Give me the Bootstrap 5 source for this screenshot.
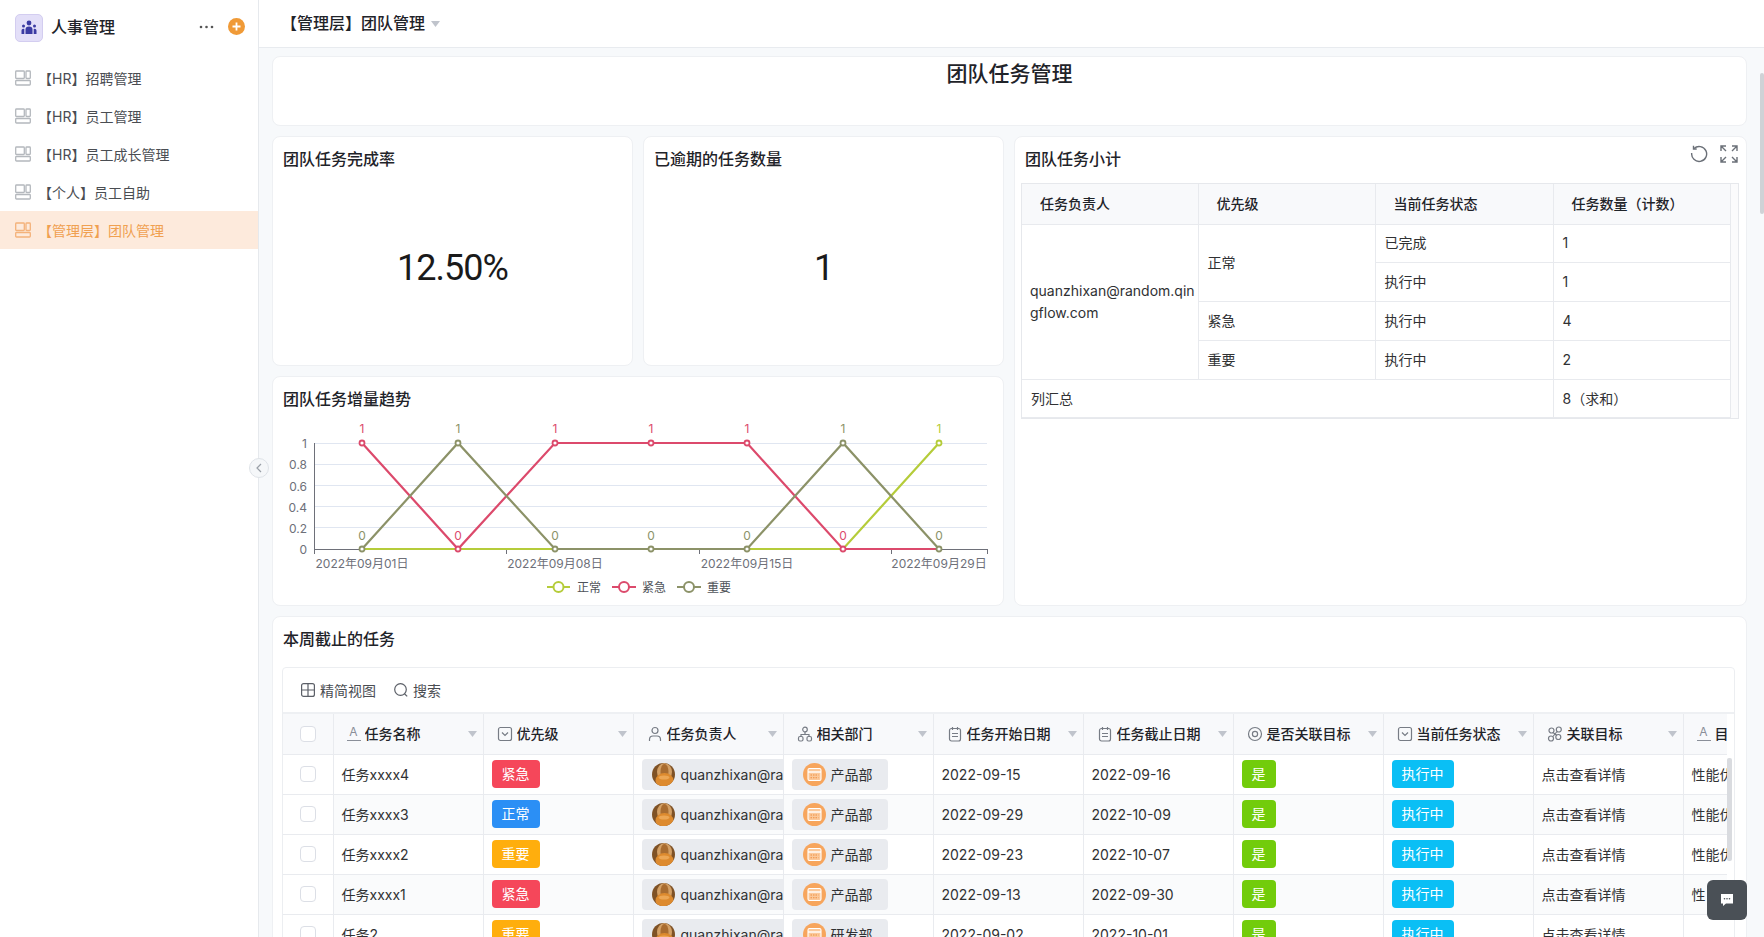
<!DOCTYPE html>
<html lang="zh-CN">
<head>
<meta charset="utf-8">
<title>团队任务管理</title>
<link rel="stylesheet" href="https://cdn.jsdelivr.net/npm/bootstrap@5.3.0/dist/css/bootstrap.min.css">
<style>
html,body{height:937px;overflow:hidden}
body{font-family:Inter,"Noto Sans CJK SC",sans-serif;font-size:14px;color:#303133;background:#f7f9fb}
.app-shell{height:937px;width:1764px;position:relative}
.side-panel{width:259px;flex:none;background:#fff;border-right:1px solid #e6e9ed}
.side-head{height:59px;padding:14px 13px 0 15px}
.side-logo{width:28px;height:28px;border-radius:5px;background:#e3dff8;border:1px solid #d3cdf0}
.side-title{font-size:16px;font-weight:500;color:#1f2329;margin-left:8px;line-height:26px}
.side-dots{margin-right:14px;margin-top:7px;flex:none}
.side-plus{margin-top:4px;flex:none}
.side-item{height:38px;padding:0 0 0 15px;color:#4a4d52;font-size:14px}
.side-item:hover{color:#4a4d52}
.side-item svg{margin-right:7px;flex:none}
.side-item.is-on{background:#fdeadc;color:#f0a050}
.top-strip{flex:none;height:48px;background:#fff;border-bottom:1px solid #e8ebef;padding:0 0 2px 22px;font-size:16px;font-weight:500;color:#1f2329}
.top-strip .drop-tri{margin-left:6px;margin-top:2px}
.drop-tri{flex:none}
.board{flex:none;display:grid;grid-template-columns:361px 361px 733px;grid-template-rows:70px 230px 230px 400px;gap:10px;padding:8px 0 0 13px;width:1488px}
.pane{background:#fff;border:1px solid #eef0f3;border-radius:8px;overflow:hidden;position:relative}
.pane-head{font-size:16px;font-weight:500;color:#1f2329;line-height:24px;padding:10px 10px 0}
.pane-wide{grid-column:1 / 4}
.pane-tall{grid-column:3;grid-row:2 / 4}
.pane-chart{grid-column:1 / 3}
.page-title{font-size:21px;font-weight:500;line-height:24px;padding-top:5px;color:#1f2329}
.stat-num{font-family:Roboto,sans-serif;font-size:36px;color:#1a1a1a;letter-spacing:-1px}
.tool-tray{position:absolute;top:8px;right:8px;gap:12px}
.sum-box{margin:12px 7px 0 6px;border:1px solid #e6e8ec;padding-right:9px;background:#fbfbfc}
.sum-tbl{table-layout:fixed;width:708px;margin:0;background:#fff;font-size:14px;border-collapse:collapse}
.sum-tbl col:nth-child(1){width:176px}
.sum-tbl col:nth-child(2){width:177px}
.sum-tbl col:nth-child(3){width:178px}
.sum-tbl col:nth-child(4){width:177px}
.sum-tbl th,.sum-tbl td{border:1px solid #e8eaee;padding:0 8px 0 9px;height:38.8px;font-weight:400;color:#303133;vertical-align:middle;line-height:22px;border-top:0}
.sum-tbl tr>*:first-child{border-left:0}
.sum-tbl thead th{background:#f8f9fb;font-weight:500;padding-left:18px;height:40px;color:#1f2329}
.sum-tbl .mail{word-break:break-all;padding:0 2px 0 8px}
.chart-svg{display:block}
.chart-svg text{font-family:Inter,"Noto Sans CJK SC",sans-serif;font-size:12px}
.task-box{margin:16px 11px 0 9px;border:1px solid #eceef1;border-radius:4px 4px 0 0;position:relative;overflow:hidden;height:280px}
.task-bar{height:46px;padding-left:18px;gap:18px;border-bottom:2px solid #eef0f3;color:#4a4d52}
.task-bar span{display:inline-flex;align-items:center;gap:5px}
.task-clip{width:1444px;overflow:hidden}
.task-tbl{table-layout:fixed;width:1550px;margin:0;border-collapse:collapse;font-size:14px}
.task-tbl th,.task-tbl td{border:1px solid #e9ebef;border-top:0;height:40px;padding:0 8px;white-space:nowrap;overflow:hidden;color:#303133;vertical-align:middle}
.task-tbl tr>*:first-child{border-left:0}
.task-tbl th{background:#f8f9fb;height:40px;font-weight:500;color:#1f2329;padding:0 0 0 13px}
.task-tbl tbody tr:nth-child(even) td{background:#fafbfc}
.task-tbl tbody tr td:first-child{background:#fff}
.task-tbl .w-chk{width:50px}
.task-tbl .w-col{width:150px}
.th-row{gap:4px;padding-right:6px}
.th-row b{font-weight:500;flex:1;overflow:hidden}
.ico-a{display:inline-block;width:14px;height:15px;line-height:12px;font-size:12px;font-weight:400;color:#8a8f99;text-align:center;border-bottom:1px solid #8a8f99;flex:none}
.tick-box{display:block;width:16px;height:16px;border:1px solid #dcdfe6;border-radius:4px;background:#fff;margin:0 auto}
.task-tbl th.cell-chk,.task-tbl td.cell-chk{padding:0}
.chip-tag{display:inline-block;height:28px;line-height:28px;padding:0 10px;border-radius:4px;color:#fff;font-size:14px;vertical-align:middle}
.bg-urgent{background:#f5475a}
.bg-normal{background:#2b8ff5}
.bg-major{background:#ffae0d}
.bg-yes{background:#72cc0b;padding:0 10px}
.bg-run{background:#0abff5}
.chip-ent{display:inline-flex;align-items:center;height:31px;gap:6px;background:#e9ebef;border-radius:4px;padding:0 10px;vertical-align:middle;color:#303133}
.chip-ent svg{flex:none}
.chip-org{padding:0 15px 0 11px;gap:5px}
.fold-dot{position:absolute;left:249px;top:458px;width:20px;height:20px;border-radius:50%;background:#f5f7f9;border:1px solid #dfe3e8}
.page-thumb{position:absolute;right:0;top:73px;width:4px;height:141px;background:#cfd2d6;border-radius:2px}
.grid-thumb{position:absolute;left:1444px;top:90px;width:5px;height:103px;background:#d9dbdf;border-radius:2px}
.help-btn{position:absolute;left:1707px;top:880px;width:40px;height:40px;background:#4a5056;border-radius:6px}
</style>
</head>
<body>
<svg width="0" height="0" class="position-absolute">
<defs>
<symbol id="i-menu" viewBox="0 0 16 16"><g fill="none" stroke="currentColor" stroke-width="1.3"><rect x=".7" y="1" width="8.6" height="7.5" rx=".8"/><rect x="11" y="1" width="4.3" height="7.5" rx=".8"/><rect x=".7" y="10.5" width="14.6" height="4.5" rx=".8"/></g></symbol>
<symbol id="i-sel" viewBox="0 0 16 16"><rect x="1.5" y="1.5" width="13" height="13" rx="2" fill="none" stroke="#777c85" stroke-width="1.2"/><path d="M5 6.5l3 3 3-3" fill="none" stroke="#777c85" stroke-width="1.2"/></symbol>
<symbol id="i-user" viewBox="0 0 16 16"><circle cx="8" cy="4.5" r="3" fill="none" stroke="#777c85" stroke-width="1.2"/><path d="M2.5 15v-1.5a3.5 3.5 0 0 1 3.5-3.5h4a3.5 3.5 0 0 1 3.5 3.5V15" fill="none" stroke="#777c85" stroke-width="1.2"/></symbol>
<symbol id="i-dept" viewBox="0 0 16 16"><g fill="none" stroke="#777c85" stroke-width="1.2"><circle cx="8" cy="3.5" r="2.3"/><rect x="1.5" y="10.5" width="4.5" height="4.5" rx="1.5"/><rect x="10" y="10.5" width="4.5" height="4.5" rx="1.5"/><path d="M8 6v2.5M4 10.5V8.5h8v2"/></g></symbol>
<symbol id="i-date" viewBox="0 0 16 16"><g fill="none" stroke="#777c85" stroke-width="1.2"><rect x="2.500" y="2.500" width="11" height="12.500" rx="2"/><path d="M5.500 1v3M10.500 1v3M5 7.500h6M5 10.500h6"/></g></symbol>
<symbol id="i-ring" viewBox="0 0 16 16"><g fill="none" stroke="#777c85" stroke-width="1.2"><circle cx="8" cy="8" r="6.5"/><circle cx="8" cy="8" r="2.6"/></g></symbol>
<symbol id="i-link" viewBox="0 0 16 16"><g fill="none" stroke="#777c85" stroke-width="1.2"><circle cx="4.500" cy="4.500" r="2.500"/><circle cx="11.800" cy="3.500" r="2.500"/><circle cx="4" cy="12.500" r="2.500"/><circle cx="11.300" cy="11" r="2.500"/><path d="M6 6.500l4 3M10 5.500l-4 5"/></g></symbol>
<symbol id="i-ava" viewBox="0 0 23 23"><clipPath id="ava-c"><circle cx="11.5" cy="11.5" r="11.5"/></clipPath><g clip-path="url(#ava-c)"><rect width="23" height="23" fill="#7f5226"/><ellipse cx="12.500" cy="9" rx="7.500" ry="9" fill="#d3a066"/><ellipse cx="12.500" cy="9" rx="4" ry="8" fill="#a96c30"/><ellipse cx="12.500" cy="17.500" rx="9" ry="7.500" fill="#dd8a2e"/><ellipse cx="12" cy="14.500" rx="5.500" ry="2" fill="#eca654"/></g></symbol>
<symbol id="i-org" viewBox="0 0 23 23"><circle cx="11.5" cy="11.5" r="11.5" fill="#f7a55c"/><rect x="5" y="5.500" width="13" height="12" rx="1.500" fill="#fbc99b" stroke="#fff" stroke-width="1.1"/><path d="M5 9h13" stroke="#fff" stroke-width="1.4"/><path d="M7.500 12h8M7.500 14.800h8" stroke="#ee8f42" stroke-width="1.100" stroke-dasharray="1.500 1"/></symbol>
<symbol id="i-tri" viewBox="0 0 9 6"><path d="M0 0h9L4.500 6z" fill="#c0c4cc"/></symbol>
</defs>
</svg>

<div class="app-shell d-flex">
  <aside class="side-panel d-flex flex-column">
    <div class="side-head d-flex align-items-start">
      <div class="side-logo d-flex align-items-center justify-content-center">
        <svg width="18" height="16" viewBox="0 0 18 16" fill="#3b3ba3"><circle cx="9" cy="3" r="2.400"/><circle cx="3.500" cy="6" r="1.500"/><circle cx="14.500" cy="6" r="1.500"/><path d="M5.500 14V9.500A3.500 3 0 0 1 12.500 9.500V14z"/><path d="M1.500 14v-3.500A2 2 0 0 1 4.300 9v5zM16.500 14v-3.500A2 2 0 0 0 13.700 9v5z"/></svg>
      </div>
      <span class="side-title flex-grow-1">人事管理</span>
      <svg class="side-dots" width="15" height="12" viewBox="0 0 15 12" fill="#555"><circle cx="2" cy="6" r="1.300"/><circle cx="7.500" cy="6" r="1.300"/><circle cx="13" cy="6" r="1.300"/></svg>
      <svg class="side-plus" width="17" height="17" viewBox="0 0 17 17"><circle cx="8.500" cy="8.500" r="8.500" fill="#f09a37"/><path d="M8.500 4.500v8M4.500 8.500h8" stroke="#fff" stroke-width="1.800"/></svg>
    </div>
    <nav class="nav flex-column">
      <a class="nav-link side-item d-flex align-items-center" href="#"><svg width="16" height="16" color="#b4b8bd"><use href="#i-menu"/></svg>【HR】招聘管理</a>
      <a class="nav-link side-item d-flex align-items-center" href="#"><svg width="16" height="16" color="#b4b8bd"><use href="#i-menu"/></svg>【HR】员工管理</a>
      <a class="nav-link side-item d-flex align-items-center" href="#"><svg width="16" height="16" color="#b4b8bd"><use href="#i-menu"/></svg>【HR】员工成长管理</a>
      <a class="nav-link side-item d-flex align-items-center" href="#"><svg width="16" height="16" color="#b4b8bd"><use href="#i-menu"/></svg>【个人】员工自助</a>
      <a class="nav-link side-item is-on d-flex align-items-center" href="#"><svg width="16" height="16" color="#f4b27a"><use href="#i-menu"/></svg>【管理层】团队管理</a>
    </nav>
  </aside>

  <main class="flex-grow-1 d-flex flex-column overflow-hidden">
    <div class="top-strip d-flex align-items-center">【管理层】团队管理<svg class="drop-tri" width="9" height="6"><use href="#i-tri"/></svg></div>
    <div class="board">
      <section class="pane pane-wide text-center"><div class="page-title">团队任务管理</div></section>

      <section class="pane d-flex flex-column">
        <div class="pane-head">团队任务完成率</div>
        <div class="flex-grow-1 d-flex align-items-center justify-content-center stat-num">12.50%</div>
      </section>
      <section class="pane d-flex flex-column">
        <div class="pane-head">已逾期的任务数量</div>
        <div class="flex-grow-1 d-flex align-items-center justify-content-center stat-num">1</div>
      </section>
      <section class="pane pane-tall">
        <div class="pane-head">团队任务小计</div>
        <div class="tool-tray d-flex">
          <svg width="18" height="18" viewBox="0 0 18 18" fill="none" stroke="#6b7078" stroke-width="1.400"><path d="M4 3.500A7.500 7.500 0 1 1 1.700 8"/><path d="M3.500 .8v3.200h3.200"/></svg>
          <svg width="18" height="18" viewBox="0 0 18 18" fill="none" stroke="#6b7078" stroke-width="1.400"><path d="M1 6V1h5M17 6V1h-5M1 12v5h5M17 12v5h-5M1 1l5 5M17 1l-5 5M1 17l5-5M17 17l-5-5"/></svg>
        </div>
        <div class="sum-box">
          <table class="table sum-tbl">
            <colgroup><col><col><col><col></colgroup>
            <thead><tr><th>任务负责人</th><th>优先级</th><th>当前任务状态</th><th>任务数量（计数）</th></tr></thead>
            <tbody>
              <tr><td rowspan="4" class="mail">quanzhixan@random.qingflow.com</td><td rowspan="2">正常</td><td>已完成</td><td>1</td></tr>
              <tr><td>执行中</td><td>1</td></tr>
              <tr><td>紧急</td><td>执行中</td><td>4</td></tr>
              <tr><td>重要</td><td>执行中</td><td>2</td></tr>
              <tr><td colspan="3">列汇总</td><td>8（求和）</td></tr>
            </tbody>
          </table>
        </div>
      </section>

      <section class="pane pane-chart">
        <div class="pane-head">团队任务增量趋势</div>
        <svg class="chart-svg" width="730" height="192" viewBox="273 411 730 192">
          <g stroke="#e0e6f1"><line x1="314" x2="987" y1="443.500" y2="443.500"/><line x1="314" x2="987" y1="464.500" y2="464.500"/><line x1="314" x2="987" y1="485.500" y2="485.500"/><line x1="314" x2="987" y1="506.500" y2="506.500"/><line x1="314" x2="987" y1="527.500" y2="527.500"/></g>
          <g stroke="#6e7079"><line x1="314.500" x2="314.500" y1="443" y2="549"/><line x1="314" x2="987.500" y1="549.500" y2="549.500"/><line x1="314.500" x2="314.500" y1="549" y2="554"/><line x1="506.500" x2="506.500" y1="549" y2="554"/><line x1="699.500" x2="699.500" y1="549" y2="554"/><line x1="891.500" x2="891.500" y1="549" y2="554"/><line x1="987.500" x2="987.500" y1="549" y2="554"/></g>
          <g fill="#6e7079" text-anchor="end" dominant-baseline="central"><text x="307" y="443">1</text><text x="307" y="464">0.8</text><text x="307" y="486">0.6</text><text x="307" y="507">0.4</text><text x="307" y="528">0.2</text><text x="307" y="549">0</text></g>
          <g fill="#6e7079" text-anchor="middle" dominant-baseline="central"><text x="362" y="563">2022年09月01日</text><text x="555" y="563">2022年09月08日</text><text x="747" y="563">2022年09月15日</text><text x="939" y="563">2022年09月29日</text></g>
          <polyline points="362,549 458,549 555,549 651,549 747,549 843,549 939,443" fill="none" stroke="#b5cc3a" stroke-width="2.200"/>
          <polyline points="362,443 458,549 555,443 651,443 747,443 843,549 939,549" fill="none" stroke="#dc4a6c" stroke-width="2.200"/>
          <polyline points="362,549 458,443 555,549 651,549 747,549 843,443 939,549" fill="none" stroke="#8c9268" stroke-width="2.200"/>
          <g fill="#fff" stroke-width="1.800">
            <circle cx="939" cy="443" r="2.500" stroke="#b5cc3a"/>
            <g stroke="#dc4a6c"><circle cx="362" cy="443" r="2.500"/><circle cx="458" cy="549" r="2.500"/><circle cx="555" cy="443" r="2.500"/><circle cx="651" cy="443" r="2.500"/><circle cx="747" cy="443" r="2.500"/><circle cx="843" cy="549" r="2.500"/></g>
            <g stroke="#8c9268"><circle cx="362" cy="549" r="2.500"/><circle cx="458" cy="443" r="2.500"/><circle cx="555" cy="549" r="2.500"/><circle cx="651" cy="549" r="2.500"/><circle cx="747" cy="549" r="2.500"/><circle cx="843" cy="443" r="2.500"/><circle cx="939" cy="549" r="2.500"/></g>
          </g>
          <g text-anchor="middle" dominant-baseline="central">
            <g fill="#dc4a6c"><text x="362" y="428">1</text><text x="555" y="428">1</text><text x="651" y="428">1</text><text x="747" y="428">1</text><text x="458" y="535">0</text><text x="843" y="535">0</text></g>
            <g fill="#8c9268"><text x="458" y="428">1</text><text x="843" y="428">1</text><text x="362" y="535">0</text><text x="555" y="535">0</text><text x="651" y="535">0</text><text x="747" y="535">0</text><text x="939" y="535">0</text></g>
            <text x="939" y="428" fill="#b5cc3a">1</text>
          </g>
          <g fill="#fff" stroke-width="2">
            <line x1="547" x2="570" y1="587" y2="587" stroke="#b5cc3a"/><circle cx="558.500" cy="587" r="5" stroke="#b5cc3a"/>
            <line x1="612" x2="636" y1="587" y2="587" stroke="#dc4a6c"/><circle cx="624" cy="587" r="5" stroke="#dc4a6c"/>
            <line x1="677" x2="701" y1="587" y2="587" stroke="#8c9268"/><circle cx="689" cy="587" r="5" stroke="#8c9268"/>
          </g>
          <g fill="#4f5359" dominant-baseline="central"><text x="577" y="587">正常</text><text x="642" y="587">紧急</text><text x="707" y="587">重要</text></g>
        </svg>
      </section>

      <section class="pane pane-wide">
        <div class="pane-head">本周截止的任务</div>
        <div class="task-box">
          <div class="task-bar d-flex align-items-center">
            <span><svg width="14" height="14" viewBox="0 0 14 14" fill="none" stroke="#5c6068" stroke-width="1.200"><rect x=".6" y=".6" width="12.800" height="12.800" rx="2"/><path d="M7 .6v12.800M.6 7h12.800"/></svg>精简视图</span>
            <span><svg width="14" height="14" viewBox="0 0 14 14" fill="none" stroke="#5c6068" stroke-width="1.200"><circle cx="6.500" cy="6.500" r="5.800"/><path d="M10.500 10.800l2.700 2.600"/></svg>搜索</span>
          </div>
          <div class="task-clip">
            <table class="table task-tbl">
              <colgroup><col class="w-chk"><col class="w-col"><col class="w-col"><col class="w-col"><col class="w-col"><col class="w-col"><col class="w-col"><col class="w-col"><col class="w-col"><col class="w-col"><col class="w-col"></colgroup>
              <thead><tr>
                <th class="cell-chk"><span class="tick-box"></span></th>
                <th><div class="d-flex align-items-center th-row"><span class="ico-a">A</span><b>任务名称</b><svg width="9" height="6"><use href="#i-tri"/></svg></div></th>
                <th><div class="d-flex align-items-center th-row"><svg width="16" height="16"><use href="#i-sel"/></svg><b>优先级</b><svg width="9" height="6"><use href="#i-tri"/></svg></div></th>
                <th><div class="d-flex align-items-center th-row"><svg width="16" height="16"><use href="#i-user"/></svg><b>任务负责人</b><svg width="9" height="6"><use href="#i-tri"/></svg></div></th>
                <th><div class="d-flex align-items-center th-row"><svg width="16" height="16"><use href="#i-dept"/></svg><b>相关部门</b><svg width="9" height="6"><use href="#i-tri"/></svg></div></th>
                <th><div class="d-flex align-items-center th-row"><svg width="16" height="16"><use href="#i-date"/></svg><b>任务开始日期</b><svg width="9" height="6"><use href="#i-tri"/></svg></div></th>
                <th><div class="d-flex align-items-center th-row"><svg width="16" height="16"><use href="#i-date"/></svg><b>任务截止日期</b><svg width="9" height="6"><use href="#i-tri"/></svg></div></th>
                <th><div class="d-flex align-items-center th-row"><svg width="16" height="16"><use href="#i-ring"/></svg><b>是否关联目标</b><svg width="9" height="6"><use href="#i-tri"/></svg></div></th>
                <th><div class="d-flex align-items-center th-row"><svg width="16" height="16"><use href="#i-sel"/></svg><b>当前任务状态</b><svg width="9" height="6"><use href="#i-tri"/></svg></div></th>
                <th><div class="d-flex align-items-center th-row"><svg width="16" height="16"><use href="#i-link"/></svg><b>关联目标</b><svg width="9" height="6"><use href="#i-tri"/></svg></div></th>
                <th><div class="d-flex align-items-center th-row"><span class="ico-a">A</span><b>目</b></div></th>
              </tr></thead>
              <tbody>
                <tr><td class="cell-chk"><span class="tick-box"></span></td><td>任务xxxx4</td><td><span class="chip-tag bg-urgent">紧急</span></td><td><span class="chip-ent"><svg width="23" height="23"><use href="#i-ava"/></svg>quanzhixan@ran</span></td><td><span class="chip-ent chip-org"><svg width="23" height="23"><use href="#i-org"/></svg>产品部</span></td><td>2022-09-15</td><td>2022-09-16</td><td><span class="chip-tag bg-yes">是</span></td><td><span class="chip-tag bg-run">执行中</span></td><td>点击查看详情</td><td>性能优</td></tr>
                <tr><td class="cell-chk"><span class="tick-box"></span></td><td>任务xxxx3</td><td><span class="chip-tag bg-normal">正常</span></td><td><span class="chip-ent"><svg width="23" height="23"><use href="#i-ava"/></svg>quanzhixan@ran</span></td><td><span class="chip-ent chip-org"><svg width="23" height="23"><use href="#i-org"/></svg>产品部</span></td><td>2022-09-29</td><td>2022-10-09</td><td><span class="chip-tag bg-yes">是</span></td><td><span class="chip-tag bg-run">执行中</span></td><td>点击查看详情</td><td>性能优</td></tr>
                <tr><td class="cell-chk"><span class="tick-box"></span></td><td>任务xxxx2</td><td><span class="chip-tag bg-major">重要</span></td><td><span class="chip-ent"><svg width="23" height="23"><use href="#i-ava"/></svg>quanzhixan@ran</span></td><td><span class="chip-ent chip-org"><svg width="23" height="23"><use href="#i-org"/></svg>产品部</span></td><td>2022-09-23</td><td>2022-10-07</td><td><span class="chip-tag bg-yes">是</span></td><td><span class="chip-tag bg-run">执行中</span></td><td>点击查看详情</td><td>性能优</td></tr>
                <tr><td class="cell-chk"><span class="tick-box"></span></td><td>任务xxxx1</td><td><span class="chip-tag bg-urgent">紧急</span></td><td><span class="chip-ent"><svg width="23" height="23"><use href="#i-ava"/></svg>quanzhixan@ran</span></td><td><span class="chip-ent chip-org"><svg width="23" height="23"><use href="#i-org"/></svg>产品部</span></td><td>2022-09-13</td><td>2022-09-30</td><td><span class="chip-tag bg-yes">是</span></td><td><span class="chip-tag bg-run">执行中</span></td><td>点击查看详情</td><td>性</td></tr>
                <tr><td class="cell-chk"><span class="tick-box"></span></td><td>任务2</td><td><span class="chip-tag bg-major">重要</span></td><td><span class="chip-ent"><svg width="23" height="23"><use href="#i-ava"/></svg>quanzhixan@ran</span></td><td><span class="chip-ent chip-org"><svg width="23" height="23"><use href="#i-org"/></svg>研发部</span></td><td>2022-09-02</td><td>2022-10-01</td><td><span class="chip-tag bg-yes">是</span></td><td><span class="chip-tag bg-run">执行中</span></td><td>点击查看详情</td><td></td></tr>
              </tbody>
            </table>
          </div>
          <div class="grid-thumb"></div>
        </div>
      </section>
    </div>
  </main>

  <div class="fold-dot d-flex align-items-center justify-content-center"><svg width="8" height="10" viewBox="0 0 8 10" fill="none" stroke="#9aa0a8" stroke-width="1.200"><path d="M6 1L2 5l4 4"/></svg></div>
  <div class="page-thumb"></div>
  <div class="help-btn d-flex align-items-center justify-content-center"><svg width="14" height="14" viewBox="0 0 14 14"><path d="M1 1h12v9.500H6l-3 2.500v-2.500H1z" fill="#fff"/><g fill="#4a5056"><circle cx="4.500" cy="5.800" r=".8"/><circle cx="7" cy="5.800" r=".8"/><circle cx="9.500" cy="5.800" r=".8"/></g></svg></div>
</div>
<script src="https://cdn.jsdelivr.net/npm/bootstrap@5.3.0/dist/js/bootstrap.bundle.min.js"></script>
</body>
</html>
